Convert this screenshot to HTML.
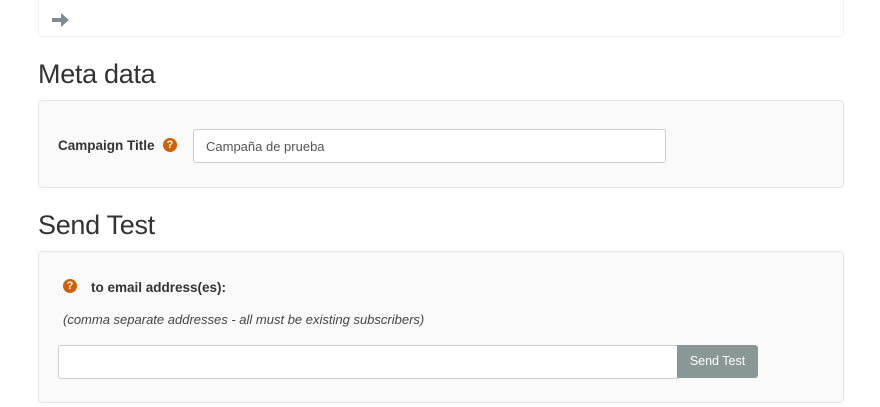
<!DOCTYPE html>
<html><head><style>
body{margin:0;background:#fff;font-family:"Liberation Sans",sans-serif;color:#333;width:880px;height:407px;overflow:hidden;position:relative}
.p{position:absolute;left:38px;width:806px;border:1px solid #e6e6e6;border-radius:4px;box-sizing:border-box}
h2{position:absolute;left:38px;margin:0;font-weight:normal;font-size:27px;color:#333;letter-spacing:-0.3px}
.q{display:inline-block;width:14px;height:14px;border-radius:50%;background:#d06000;color:#fff;font-size:11px;font-weight:bold;text-align:center;line-height:14px;position:absolute}
.in{position:absolute;background:#fff;border:1px solid #ccc;border-radius:3px;box-sizing:border-box}
</style></head><body>
<div class="p" style="top:-5px;height:42px;background:#fff;border-color:#f2f2f2">
<svg style="position:absolute;left:13px;top:16px" width="18" height="16" viewBox="0 0 18 16"><path d="M0 6h9V1l8 7-8 7V10H0z" fill="#7f8c8d"/></svg>
</div>
<h2 style="top:59px">Meta data</h2>
<div class="p" style="top:100px;height:88px;background:#fafafa">
<div style="position:absolute;left:19px;top:37px;font-weight:bold;font-size:13.5px">Campaign Title</div>
<span class="q" style="left:124px;top:37px">?</span>
<div class="in" style="left:154px;top:28px;width:473px;height:34px;font-size:13px;color:#555;padding:9px 12px">Campaña de prueba</div>
</div>
<h2 style="top:210px">Send Test</h2>
<div class="p" style="top:251px;height:152px;background:#fafafa">
<span class="q" style="left:24px;top:27px">?</span>
<div style="position:absolute;left:52px;top:28px;font-weight:bold;font-size:13.5px">to email address(es):</div>
<div style="position:absolute;left:24px;top:60px;font-style:italic;font-size:13px;color:#444">(comma separate addresses - all must be existing subscribers)</div>
<div class="in" style="left:19px;top:93px;width:620px;height:34px;border-radius:3px 0 0 3px"></div>
<div style="position:absolute;left:638px;top:93px;width:81px;height:33px;background:#8a9797;color:#fff;font-size:12.5px;text-align:center;line-height:33px;border-radius:0 3px 3px 0">Send Test</div>
</div>
</body></html>
